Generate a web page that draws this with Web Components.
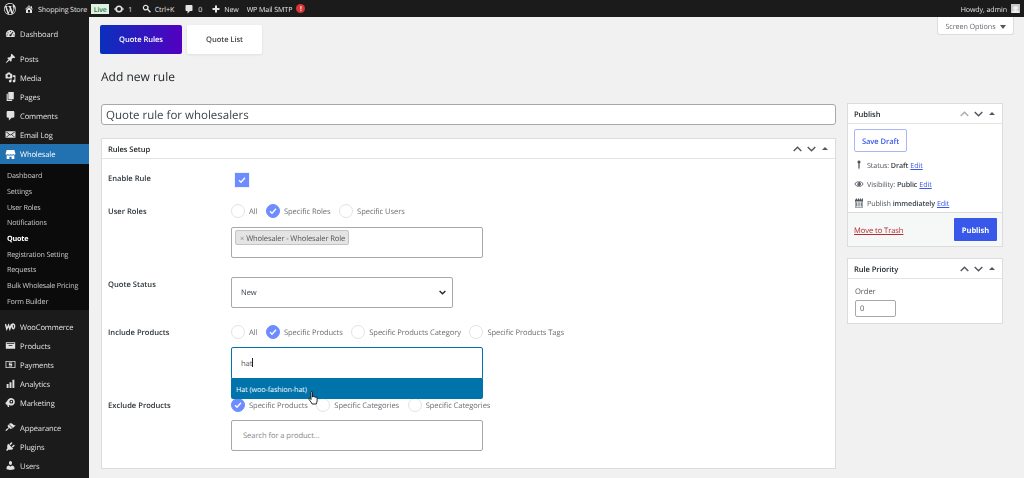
<!DOCTYPE html>
<html lang="en"><head><meta charset="utf-8"><title>Add new rule</title>
<style>
html,body{margin:0;padding:0;height:478px;overflow:hidden;background:#f1f1f1;font-family:"Open Sans","Noto Sans",sans-serif;font-size:8px;color:#32373c;text-rendering:geometricPrecision;letter-spacing:-.08px}
</style></head><body>
<app-shell>
  <wp-admin-bar slot="bar"></wp-admin-bar>
  <wp-side-menu slot="menu"></wp-side-menu>
  <top-strip></top-strip>
  <page-title>Add new rule</page-title>
  <two-cols>
    <div>
      <title-input>Quote rule for wholesalers</title-input>
      <meta-box heading="Rules Setup" class="rules">
        <form-row label="Enable Rule" lift gap="14"><check-box></check-box></form-row>
        <form-row label="User Roles" gap="17">
          <radio-set><radio-opt>All</radio-opt><radio-opt checked>Specific Roles</radio-opt><radio-opt>Specific Users</radio-opt></radio-set>
          <role-picker>Wholesaler - Wholesaler Role</role-picker>
        </form-row>
        <form-row label="Quote Status" gap="19"><status-select>New</status-select></form-row>
        <form-row label="Include Products" gap="17">
          <radio-set><radio-opt>All</radio-opt><radio-opt checked>Specific Products</radio-opt><radio-opt>Specific Products Category</radio-opt><radio-opt>Specific Products Tags</radio-opt></radio-set>
          <product-search focus value="hat" result="Hat (woo-fashion-hat)"></product-search>
        </form-row>
        <form-row label="Exclude Products" gap="19">
          <radio-set><radio-opt checked>Specific Products</radio-opt><radio-opt>Specific Categories</radio-opt><radio-opt>Specific Categories</radio-opt></radio-set>
          <product-search placeholder="Search for a product..."></product-search>
        </form-row>
      </meta-box>
    </div>
    <div>
      <meta-box heading="Publish" dim-up><publish-panel></publish-panel></meta-box>
      <meta-box heading="Rule Priority" class="prio"><order-field></order-field></meta-box>
    </div>
  </two-cols>
</app-shell>
<script>
const P={
wp:'M20 10c0-5.51-4.49-10-10-10C4.48 0 0 4.49 0 10c0 5.52 4.48 10 10 10 5.51 0 10-4.48 10-10zM7.78 15.37L4.37 6.22c.55-.02 1.17-.08 1.17-.08.5-.06.44-1.13-.06-1.11 0 0-1.45.11-2.37.11-.18 0-.37 0-.58-.01C4.12 2.69 6.87 1.11 10 1.11c2.33 0 4.45.87 6.05 2.34-.68-.11-1.65.39-1.65 1.58 0 .74.45 1.36.9 2.1.35.61.55 1.36.55 2.46 0 1.49-1.4 5-1.4 5l-3.03-8.37c.54-.02.82-.17.82-.17.5-.05.44-1.25-.06-1.22 0 0-1.44.12-2.38.12-.87 0-2.33-.12-2.33-.12-.5-.03-.56 1.2-.06 1.22l.92.08 1.26 3.41zM17.41 10c.24-.64.74-1.87.43-4.25.7 1.29 1.05 2.71 1.05 4.25 0 3.29-1.73 6.24-4.4 7.78.97-2.59 1.94-5.2 2.92-7.78zM6.1 18.09C3.12 16.65 1.11 13.53 1.11 10c0-1.3.23-2.48.72-3.59C3.25 10.3 4.67 14.2 6.1 18.09zm4.03-6.63l2.58 6.98c-.86.29-1.76.45-2.71.45-.79 0-1.57-.11-2.29-.33.81-2.38 1.62-4.74 2.42-7.1z',
home:'M16 8.5l1.53 1.53-1.06 1.06L10 4.62l-6.47 6.47-1.06-1.06L10 2.5l4 4v-2h2v4zm-6-2.46l6 5.99V18H4v-5.97zM12 17v-5H8v5h4z',
update:'M10 3a7 7 0 1 1 0 14 7 7 0 0 1 0-14zm0 3a4 4 0 1 0 0 8 4 4 0 0 0 0-8z M0 10l3.500-3.500v7z M20 10l-3.500-3.500v7z',
search:'M12.14 4.78c-2.03-2.03-5.33-2.03-7.36 0s-2.03 5.33 0 7.36c1.78 1.78 4.55 2 6.57.64l4.9 4.9 1.8-1.8-4.9-4.9c1.36-2.02 1.14-4.79-.64-6.57zm-1.5 5.86c-1.2 1.2-3.16 1.2-4.36 0s-1.2-3.16 0-4.36 3.16-1.2 4.36 0 1.2 3.16 0 4.36z',
comment:'M5 2h10c1.1 0 2 .9 2 2v8c0 1.1-.9 2-2 2h-3l-5 5v-5H5c-1.1 0-2-.9-2-2V4c0-1.1.9-2 2-2z',
plus:'M17 8h-5V3H8v5H3v4h5v5h4v-5h5z',
dash:'M10 3.5a8.5 8.5 0 0 0-8.5 8.5c0 1.7.5 3.2 1.3 4.5h14.4c.8-1.3 1.3-2.8 1.3-4.5A8.5 8.5 0 0 0 10 3.5zM10 5.5a1 1 0 1 1 0 2 1 1 0 0 1 0-2zM5.5 7.5a1 1 0 1 1 0 2 1 1 0 0 1 0-2zM14 7l1.2.8-3.6 4.7a1.9 1.9 0 1 1-1.4-1.1zM3.7 11.5a1 1 0 1 1 0 2 1 1 0 0 1 0-2zM16.3 11.5a1 1 0 1 1 0 2 1 1 0 0 1 0-2z',
pin:'M10.44 3.02l1.82-1.82 6.36 6.35-1.83 1.82c-1.05-.68-2.48-.57-3.41.36l-.75.75c-.92.93-1.04 2.35-.35 3.41l-1.83 1.82-2.41-2.41-2.8 2.79c-.42.42-3.38 2.71-3.8 2.29s1.86-3.39 2.28-3.81l2.79-2.79L4.1 9.36l1.83-1.82c1.05.69 2.48.57 3.4-.36l.75-.75c.93-.92 1.05-2.35.36-3.41z',
media:'M13 11V4c0-.55-.45-1-1-1h-1.67L9 1H5L3.67 3H2c-.55 0-1 .45-1 1v7c0 .55.45 1 1 1h10c.55 0 1-.45 1-1zM7 4.5c1.38 0 2.5 1.12 2.5 2.5S8.38 9.5 7 9.5 4.5 8.38 4.5 7 5.62 4.5 7 4.5zM14 6h5v10.5c0 1.38-1.12 2.5-2.5 2.5S14 17.88 14 16.5s1.12-2.5 2.5-2.5c.17 0 .34.02.5.05V9h-3V6zm-4 8.05V13h2v3.5c0 1.38-1.12 2.5-2.5 2.5S7 17.88 7 16.5 8.12 14 9.5 14c.17 0 .34.02.5.05z',
pages:'M6 15V2h10v13H6zm-1 1h8v2H3V5h2v11z',
mail:'M1 4h18v12H1zM2.5 5.2v1l5 3.8-5 4v.8h.7l5.3-4.2 1.5 1.2 1.5-1.2 5.3 4.2h.7V14l-5-4 5-3.8v-1h-.4L10 10.6 2.9 5.2z',
store:'M3 2h14l2 6.5c0 1.2-1 2-2 2s-1.6-.6-2-1.3c-.4.7-1.4 1.3-2.5 1.3S10.500 9.900 10 9.200c-.5.7-1.400 1.300-2.500 1.300S5.400 9.900 5 9.200C4.600 9.900 4 10.500 3 10.500s-2-.8-2-2zM3 11.700c.7.100 1.500 0 2-.4.7.6 1.600.9 2.500.9.900 0 1.800-.3 2.500-.9.7.6 1.600.9 2.500.9s1.800-.3 2.500-.9c.5.4 1.300.5 2 .4V18h-5v-4H8v4H3z',
box:'M1.500 4h17v12h-17zM3 5.300V6.800h14V5.300zM6.500 9v1.500h7V9z',
pay:'M1 3.500h18v13H1zM2.500 5v10h15V5zM7 6.500h6V8H8.500v1.300H13v4.200H7V12h4.500v-1.200H7z',
bars:'M3 11h3.500v7H3zM8.200 7.500h3.500V18H8.200zM13.500 3H17v15h-3.500z',
mega:'M18 8.500a7 7 0 0 0-12.500-4L3 8.500c-1.500.5-2 1.500-2 2.800s.7 2.200 2 2.700l1 .2 1.200 3.800h2.500l-1-3.300 2.800.7A7 7 0 0 0 18 8.500zM11.500 5a3.500 3.500 0 1 1 0 7 3.500 3.500 0 0 1 0-7zM11.500 7a1.500 1.500 0 1 0 0 3 1.500 1.500 0 0 0 0-3z',
brush:'M14.480 11.060L7.410 3.990l1.500-1.500c.5-.56 2.300-.47 3.510.32 1.210.8 1.430 1.280 2.910 2.100 1.180.64 2.450 1.260 4.230.91zm-.710.710L6.700 4.700 4.930 6.470c-.39.39-.39 1.020 0 1.410l1.060 1.060c.39.39.39 1.030 0 1.420-.6.600-1.700 1.100-3.180 2.500-1.480 1.430-2.120 2.700-1.600 3.200.550.5 1.800-.1 3.250-1.600 1.430-1.450 1.900-2.550 2.500-3.150.4-.4 1.030-.4 1.420 0l1.060 1.060c.39.39 1.020.39 1.410 0z',
plug:'M13.110 4.360L9.870 7.600 8 5.730l3.240-3.240c.35-.34 1.050-.2 1.560.32.52.51.66 1.210.31 1.550zm-8 1.770l.91-1.120 9.010 9.010-1.190.84c-.71.71-2.630 1.160-3.820 1.160H6.140L4.900 17.260c-.59.59-1.540.59-2.120 0a1.500 1.500 0 0 1 0-2.120l1.240-1.240v-3.880c0-1.130.4-3.180 1.090-3.890zm7.260 3.970l3.240-3.240c.34-.35 1.040-.21 1.550.31.520.51.66 1.210.31 1.550l-3.240 3.250z',
user:'M10 9.250c-2.270 0-2.730-3.440-2.730-3.440C7 4.020 7.820 2 9.970 2c2.160 0 2.980 2.020 2.710 3.810 0 0-.41 3.440-2.680 3.440zm0 2.570L12.720 10c2.390 0 4.520 2.330 4.520 4.530v2.490s-3.650 1.130-7.240 1.130c-3.650 0-7.240-1.130-7.240-1.130v-2.490c0-2.250 1.940-4.480 4.150-4.480z',
key:'M10 1a3.200 3.200 0 0 1 1.300 6.100V15L10 19.500 8.700 15V7.100A3.200 3.200 0 0 1 10 1z',
eye:'M1 10s3.500-6 9-6 9 6 9 6-3.500 6-9 6-9-6-9-6zm1.700 0c1 1.200 3.500 4.800 7.300 4.800s6.300-3.600 7.300-4.800c-1-1.200-3.500-4.800-7.300-4.800S3.700 8.800 2.700 10zM10 6a4 4 0 1 1 0 8 4 4 0 0 1 0-8zM8 8.500a1.200 1.200 0 1 0 0 2.400 1.200 1.200 0 0 0 0-2.400z',
cal:'M2 3h2V1h2v2h2V1h2v2h2V1h2v2h2V1h2v2h0v16H2zM3 7v11h14V7zM4.500 8.500h2V17h-2zM9 8.500h2V17H9zM13.500 8.500h2V17h-2z'
};
const def=(n,css,html,extra)=>{customElements.define(n,class extends HTMLElement{
  constructor(){super();this.attachShadow({mode:'open'});}
  connectedCallback(){ if(!this.shadowRoot.firstChild){this.shadowRoot.innerHTML='<style>'+css+'</style>'+(typeof html==='function'?html(this):html);} if(extra) extra(this); }
});};
def('wp-icon',':host{display:inline-flex;width:var(--s,12px);height:var(--s,12px);color:inherit;flex:none}svg{width:100%;height:100%;display:block}',
 ()=>'<svg viewBox="0 0 20 20"><path fill="currentColor" fill-rule="evenodd"></path></svg>',
 e=>{const n=e.getAttribute('name'),s=e.shadowRoot.querySelector('svg');
   if(n==='woo'){s.innerHTML='<path d="M.8 5.500l2.400 9 3.300-7 2.300 7 3.200-9M13 6.500c1-1.500 3-1.500 4 .8s.3 6.200-1.500 6.700c-1.700.3-2.800-2.500-2.500-7.500z" fill="none" stroke="currentColor" stroke-width="2.600"/>';}
   else s.firstChild.setAttribute('d',P[n]);});

def('bar-item',':host{display:inline-flex;align-items:center;gap:var(--g,3px);height:17px;padding-top:2px;box-sizing:border-box;color:#e4e4e4;white-space:nowrap}::slotted(*){margin-top:-2px}','<slot></slot>');
def('wp-admin-bar',`:host{display:flex;align-items:center;height:17px;background:#1b1b1b;color:#e4e4e4;font-size:7.1px;letter-spacing:-.1px;padding:0 4px;box-sizing:border-box}
 .l{display:flex;align-items:center;flex:1}
 .live{background:#dff0e4;color:#2c7a3c;font-size:6.8px;height:10px;width:18px;box-sizing:border-box;text-align:center;line-height:11px;margin-left:4px;font-weight:600}
 .dot{width:9px;height:9px;border-radius:50%;background:#d63638;color:#fff;font-size:6.5px;line-height:10px;text-align:center;font-weight:700}
 .av{width:9px;height:9px;background:#c8c8c8;margin-left:1px;position:relative;overflow:hidden;display:block}
 .av:after{content:"";position:absolute;left:2px;top:1.500px;width:5px;height:4px;border-radius:50%;background:#eee;box-shadow:0 5px 0 1px #eee}`,
`<div class="l">
 <wp-icon name="wp" style="--s:12px;margin-right:8px"></wp-icon>
 <bar-item style="--g:4px"><wp-icon name="home" style="--s:10px"></wp-icon>Shopping Store</bar-item>
 <span class="live">Live</span>
 <bar-item style="margin-left:5px;margin-right:8.500px;--g:4px"><wp-icon name="update" style="--s:10px"></wp-icon>1</bar-item>
 <bar-item style="--g:3px;margin-right:10px"><wp-icon name="search" style="--s:11px"></wp-icon>Ctrl+K</bar-item>
 <bar-item style="--g:4px;margin-right:9px"><wp-icon name="comment" style="--s:10px"></wp-icon>0</bar-item>
 <bar-item style="--g:3px;margin-right:8px"><wp-icon name="plus" style="--s:10px"></wp-icon>New</bar-item>
 <bar-item style="--g:4px">WP Mail SMTP <span class="dot">!</span></bar-item>
 </div>
 <bar-item style="--g:3px">Howdy, admin<span class="av"></span></bar-item>`);

def('menu-item',`:host{display:flex;align-items:center;height:19px;padding-top:2px;color:#e0e0e0;padding-left:5px;gap:4px;font-size:7.6px;letter-spacing:-.13px;white-space:nowrap;box-sizing:border-box}
 ::slotted(wp-icon){margin-top:-2px}
 :host([active]){background:#2271b1;color:#fff;height:20px}`,'<slot name="i"></slot><slot></slot>');
def('sub-item',`:host{display:flex;align-items:center;height:15.700px;padding-top:2px;box-sizing:border-box;color:#c8c8c8;padding-left:7px;font-size:7.2px;letter-spacing:-.2px;white-space:nowrap}
 :host([cur]){color:#fff;font-weight:700}`,'<slot></slot>');
def('wp-side-menu',`:host{display:block;width:89px;height:461px;background:#1b1b1b;padding-top:7px;box-sizing:border-box;overflow:hidden}
 .sub{background:#0b0b0b;padding:3.500px 0 2.200px;height:146px;box-sizing:border-box}
 wp-icon{--s:11px}`,
`<menu-item><wp-icon slot="i" name="dash"></wp-icon>Dashboard</menu-item>
 <menu-item style="margin-top:6px"><wp-icon slot="i" name="pin"></wp-icon>Posts</menu-item>
 <menu-item><wp-icon slot="i" name="media"></wp-icon>Media</menu-item>
 <menu-item><wp-icon slot="i" name="pages"></wp-icon>Pages</menu-item>
 <menu-item><wp-icon slot="i" name="comment"></wp-icon>Comments</menu-item>
 <menu-item><wp-icon slot="i" name="mail"></wp-icon>Email Log</menu-item>
 <menu-item active><wp-icon slot="i" name="store"></wp-icon>Wholesale</menu-item>
 <div class="sub"><sub-item>Dashboard</sub-item><sub-item>Settings</sub-item><sub-item>User Roles</sub-item><sub-item>Notifications</sub-item><sub-item cur>Quote</sub-item><sub-item>Registration Setting</sub-item><sub-item>Requests</sub-item><sub-item>Bulk Wholesale Pricing</sub-item><sub-item>Form Builder</sub-item></div>
 <menu-item style="margin-top:7px"><wp-icon slot="i" name="woo"></wp-icon>WooCommerce</menu-item>
 <menu-item><wp-icon slot="i" name="box"></wp-icon>Products</menu-item>
 <menu-item><wp-icon slot="i" name="pay"></wp-icon>Payments</menu-item>
 <menu-item><wp-icon slot="i" name="bars"></wp-icon>Analytics</menu-item>
 <menu-item><wp-icon slot="i" name="mega"></wp-icon>Marketing</menu-item>
 <menu-item style="margin-top:6px"><wp-icon slot="i" name="brush"></wp-icon>Appearance</menu-item>
 <menu-item><wp-icon slot="i" name="plug"></wp-icon>Plugins</menu-item>
 <menu-item><wp-icon slot="i" name="user"></wp-icon>Users</menu-item>`);

def('app-shell',`:host{display:grid;grid-template-columns:89px 935px;grid-template-rows:17px 461px;width:1024px;height:478px;overflow:hidden;filter:blur(.3px)}
 ::slotted([slot=bar]){grid-column:1/3}
 main{padding:0 10px 0 11px;display:flex;flex-direction:column;min-width:0}`,
 '<slot name="bar"></slot><slot name="menu"></slot><main><slot></slot></main>');

def('top-strip',`:host{display:flex;justify-content:space-between;align-items:flex-start;height:37px}
 .tabs{display:flex;gap:5px;margin-top:8px}
 .t{height:29px;padding-top:1px;display:flex;align-items:center;justify-content:center;border-radius:2px;font-size:7.6px;font-weight:600;box-sizing:border-box}
 .a{width:82px;background:linear-gradient(90deg,#0a30bd,#5300c0);color:#fff}
 .b{width:75px;background:#fff;color:#444;box-shadow:0 1px 3px rgba(0,0,0,.08)}
 .so{width:77px;height:18px;padding-top:2px;background:#fff;border:1px solid #dcdcde;border-top:0;border-radius:0 0 3px 3px;box-sizing:border-box;display:flex;align-items:center;justify-content:center;gap:4px;color:#646970;font-size:7.2px}
 .so i{width:0;height:0;border:3px solid transparent;border-top:4px solid #50575e;border-bottom:0}`,
 '<div class="tabs"><div class="t a">Quote Rules</div><div class="t b">Quote List</div></div><div class="so">Screen Options <i></i></div>');
def('page-title',`:host{display:block;height:50px;padding-left:1px;font-size:12px;letter-spacing:0;line-height:46px;color:#1d2327;box-sizing:border-box}`,'<slot></slot>');
def('two-cols',`:host{display:grid;grid-template-columns:735px 156px;column-gap:11px;align-items:start;margin-left:1px;margin-top:-1px}`,'<slot></slot>');
def('title-input',`:host{display:block;height:21px;margin:1px 0 13px;background:#fff;border:1px solid #a8a8a8;border-radius:3px;box-sizing:border-box;font-size:11.5px;letter-spacing:0;line-height:21.500px;padding-left:4px;color:#3c434a}`,'<slot></slot>');

def('meta-box',`:host{display:block;background:#fff;border:1px solid #dcdcde;box-sizing:border-box;margin-bottom:11px}
 header{height:20px;display:flex;align-items:center;border-bottom:1px solid #e4e4e4;padding:2px 7px 0 6px;box-sizing:border-box;font-weight:600;font-size:7.6px;color:#1d2327}
 header span{flex:1}
 svg{width:9px;height:6px;margin:-2px 0 0 5px;fill:none;stroke:#50575e;stroke-width:1.400}
 i{width:0;height:0;border:3px solid transparent;border-bottom:3.500px solid #50575e;border-top:0;margin:-2px 0 0 6px}
 :host(.rules){padding-bottom:17px;margin:0}`,
 e=>`<header><span>${e.getAttribute('heading')}</span><svg viewBox="0 0 9 6"${e.hasAttribute('dim-up')?' style="stroke:#aaa"':''}><path d="M.7 5L4.500 1.200 8.300 5"/></svg><svg viewBox="0 0 9 6"><path d="M.7 1l3.800 3.800L8.300 1"/></svg><i></i></header><section><slot></slot></section>`);

def('form-row',`:host{display:grid;grid-template-columns:123px 252px;padding-left:6px;margin-top:var(--gap,14px)}
 label{display:block;height:14px;line-height:17px;font-weight:600;font-size:7.6px;letter-spacing:0;color:#2c3338}
 :host([lift]) label{margin-top:-2px}
 .c{display:flex;flex-direction:column;min-width:0}`,
 e=>`<label>${e.getAttribute('label')}</label><div class="c"><slot></slot></div>`,
 e=>{if(e.hasAttribute('gap'))e.style.setProperty('--gap',e.getAttribute('gap')+'px');});
def('check-box',`:host{display:flex;width:14px;height:14px;margin-left:4px;background:#6d8cff;align-items:center;justify-content:center;box-shadow:0 0 0 .5px #dfe5ff}
 svg{width:8px;height:8px;fill:none;stroke:#fff;stroke-width:1.300}`,'<svg viewBox="0 0 8 8"><path d="M1 4.300l2 2L7 1.800"/></svg>');
def('radio-set',`:host{display:flex;gap:8.500px;height:14px;white-space:nowrap}`,'<slot></slot>');
def('radio-opt',`:host{display:inline-flex;align-items:center;gap:4px;height:14px;padding-top:2px;box-sizing:border-box;color:#6b6f74;font-size:7.6px}
 b{display:flex;width:14px;height:14px;margin-top:-2px;border-radius:50%;border:1px solid #e3e3e3;background:#fff;box-sizing:border-box;align-items:center;justify-content:center}
 :host([checked]) b{background:#6d8cff;border-color:#6d8cff}
 svg{width:8px;height:8px;fill:none;stroke:#fff;stroke-width:1.300;display:none}
 :host([checked]) svg{display:block}`,'<b><svg viewBox="0 0 8 8"><path d="M1 4.300l2 2L7 1.800"/></svg></b><slot></slot>');
def('role-picker',`:host{display:block;height:31px;margin-top:9px;border:1px solid #a8a8a8;border-radius:2px;box-sizing:border-box;padding:2px 3px;background:#fff}
 .tag{display:inline-flex;align-items:center;height:15px;width:114px;padding-top:2px;box-sizing:border-box;background:#e4e4e4;border:1px solid #c4c4c4;border-radius:2px;padding-left:4px;color:#555;font-size:7.6px;letter-spacing:-.14px;gap:2px;white-space:nowrap}
 u{text-decoration:none;color:#888}`,'<span class="tag"><u>×</u><slot></slot></span>');
def('status-select',`:host{display:flex;align-items:center;justify-content:space-between;width:222px;height:31px;border:1px solid #a8a8a8;border-radius:2px;box-sizing:border-box;padding:0 6px 0 9px;font-size:7.6px;color:#3c434a;background:#fff}
 svg{width:7px;height:5px;fill:none;stroke:#23282d;stroke-width:1.400}`,'<slot></slot><svg viewBox="0 0 7 5"><path d="M.6 1l2.900 2.800L6.400 1"/></svg>');
def('product-search',`:host{display:block;position:relative;height:31px;margin-top:8px;border:1px solid #a8a8a8;border-radius:2px;box-sizing:border-box;padding-left:11px;line-height:31px;font-size:7.6px;color:#888;background:#fff}
 :host([focus]){height:32px;border-color:#0073aa;border-radius:2px 2px 0 0;padding-left:9px;color:#555;line-height:32px}
 .caret{display:inline-block;width:.6px;height:9px;background:#222;vertical-align:-1px}
 .drop{position:absolute;left:-1px;right:-1px;top:31px;height:20px;background:#0073aa;color:#fff;border-radius:0 0 2px 2px;font-size:7.2px;line-height:22px;padding-left:5px;z-index:2}
 .cur{position:absolute;left:76px;top:43px;width:11px;height:14px;z-index:3}`,
 e=>{const v=e.getAttribute('value'),r=e.getAttribute('result'),p=e.getAttribute('placeholder');
  return v?`${v}<span class="caret"></span><div class="drop">${r}</div><svg class="cur" viewBox="0 0 11 14"><path d="M3 1.200c0-.9 1.500-.9 1.500 0V6l.4-.1c.4-.8 1.400-.5 1.500.2.400-.6 1.300-.4 1.400.4.500-.4 1.300-.1 1.300.7v2.600c0 1.200-.7 2.100-.9 3.200H4.100C3.700 11.800 2.300 10.300 1 8.400c-.6-.9.300-1.700 1.100-.9l.9 1z" fill="#fff" stroke="#111" stroke-width=".9"/></svg>`:p;});

def('publish-panel',`:host{display:block;font-size:7.6px;color:#50575e}
 .top{padding:5px 6px 0}
 .save{width:53px;height:23px;padding-top:2px;border:1px solid #a9b8f5;border-radius:2px;box-sizing:border-box;display:flex;align-items:center;justify-content:center;color:#3858e9;font-weight:600;margin-bottom:3px}
 .m{display:flex;align-items:center;gap:3px;height:19px;padding-top:2px;box-sizing:border-box;font-size:7.2px;letter-spacing:-.1px;white-space:nowrap}
 wp-icon{--s:10px;color:#50575e;margin-top:-2px}
 a{color:#3858e9;text-decoration:underline;margin-left:-1px}
 b{font-weight:600;color:#3c434a}
 .ft{display:flex;align-items:center;justify-content:space-between;height:34px;background:#f6f7f7;border-top:1px solid #dcdcde;padding:0 5px 0 6px;box-sizing:border-box}
 .tr{color:#b32d2e;text-decoration:underline;padding-top:2px}
 .pub{width:43px;height:23px;padding-top:2px;box-sizing:border-box;background:#3858e9;color:#fff;font-weight:700;display:flex;align-items:center;justify-content:center;border-radius:1px}`,
 `<div class="top"><div class="save">Save Draft</div>
 <div class="m"><wp-icon name="key"></wp-icon><span>Status: <b>Draft</b></span> <a>Edit</a></div>
 <div class="m"><wp-icon name="eye"></wp-icon><span>Visibility: <b>Public</b></span> <a>Edit</a></div>
 <div class="m"><wp-icon name="cal"></wp-icon><span>Publish <b>immediately</b></span> <a>Edit</a></div></div>
 <div class="ft"><span class="tr">Move to Trash</span><span class="pub">Publish</span></div>`);
def('order-field',`:host{display:block;padding:8px 7px 6px;font-size:7.6px;color:#50575e;height:44px;box-sizing:border-box}
 div{width:41px;height:17px;border:1px solid #a8a8a8;border-radius:2px;box-sizing:border-box;margin-top:2px;padding-left:4px;line-height:16px}
 span{display:block;line-height:11px}`,'<span>Order</span><div>0</div>');
</script>
</body></html>
